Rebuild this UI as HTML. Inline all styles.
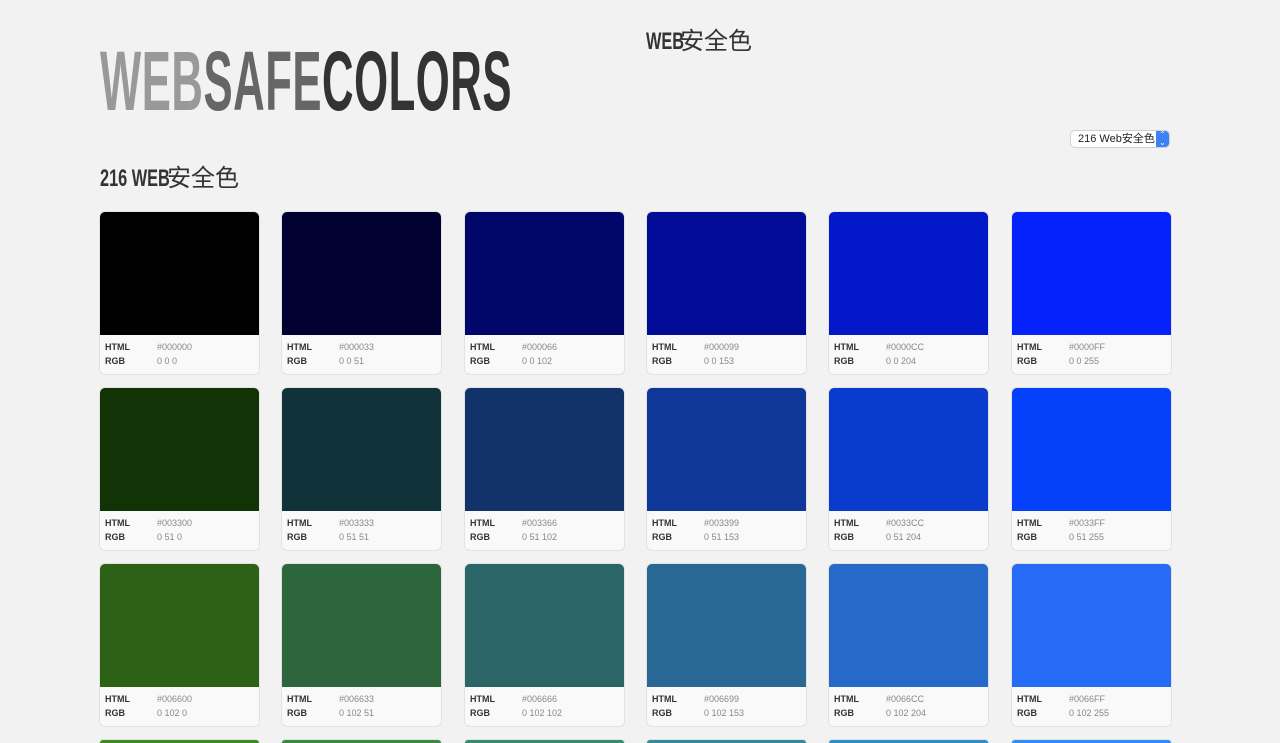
<!DOCTYPE html>
<html><head><meta charset="utf-8"><style>
html,body{margin:0;padding:0;background:#f2f2f2;width:1280px;height:743px;overflow:hidden;font-family:"Liberation Sans","Noto Sans CJK SC",sans-serif}
#wrap{position:relative;width:1280px;height:743px;overflow:hidden}
.logo{position:absolute;left:100px;top:36px;font-weight:bold;font-size:84px;line-height:90px;transform:scaleX(0.52);transform-origin:left top;white-space:nowrap;letter-spacing:1px}
.sub{position:absolute;left:646px;top:27px;font-size:24px;line-height:30px;color:#333;white-space:nowrap}
.h2{position:absolute;left:100px;top:164px;font-size:24px;line-height:30px;color:#333;white-space:nowrap}
.lat{display:inline-block;overflow:visible;vertical-align:top}
.lat b{display:inline-block;transform:scaleX(.68);transform-origin:left}
.sel{position:absolute;left:1071px;top:131px;width:98px;height:16px;background:#fff;border-radius:4px;box-shadow:0 0 0 1px #d0d0d0;font-size:11px;line-height:16px;color:#222}
.sel span{margin-left:7px}
.sel i{position:absolute;right:0;top:0;width:13px;height:16px;background:#3b82f6;border-radius:0 4px 4px 0;color:#fff;font-style:normal;font-size:8px;text-align:center;line-height:8px}
.card{position:absolute;width:159px;height:162px;border-radius:5px;overflow:hidden;background:#f9f9f9;box-shadow:0 0 0 1px #e2e2e2}
.card .c{height:123px}
.card .t{font-size:9px;color:#333;padding:5px 0 0 5px;line-height:14px}
.card .t b{display:inline-block;width:52px}
.card .t span{color:#888}
</style></head><body><div id="wrap">
<div class="logo"><span style="color:#999">WEB</span><span style="color:#666">SAFE</span><span style="color:#333">COLORS</span></div>
<div class="sub"><span class="lat" style="width:34px"><b>WEB</b></span>安全色</div>
<div class="sel"><span>216 Web安全色</span><i>⌃<br>⌄</i></div>
<div class="h2"><span class="lat" style="width:67px"><b>216 WEB</b></span>安全色</div>
<div id="g"></div>
</div>
<script>
var xs=[100,282,465,647,829,1012],ys=[212,388,564,740];
var rows=[
[["#000000","000000","0 0 0"],["#000131","000033","0 0 51"],["#01066a","000066","0 0 102"],["#020c96","000099","0 0 153"],["#0318c8","0000CC","0 0 204"],["#0522fb","0000FF","0 0 255"]],
[["#123305","003300","0 51 0"],["#10333a","003333","0 51 51"],["#11336a","003366","0 51 102"],["#0f3799","003399","0 51 153"],["#0a3bcf","0033CC","0 51 204"],["#0540fb","0033FF","0 51 255"]],
[["#2d6216","006600","0 102 0"],["#2d653c","006633","0 102 51"],["#2a6568","006666","0 102 102"],["#296795","006699","0 102 153"],["#2769c8","0066CC","0 102 204"],["#266bf5","0066FF","0 102 255"]],
[["#3b8a22","009900","0 153 0"],["#3a8a45","009933","0 153 51"],["#378a70","009966","0 153 102"],["#348b98","009999","0 153 153"],["#318dc8","0099CC","0 153 204"],["#2e8ef6","0099FF","0 153 255"]]];
var h="";
rows.forEach(function(r,i){r.forEach(function(c,j){
if(i==3){h+='<div class="card" style="left:'+xs[j]+'px;top:740px;height:3px;border-radius:5px 5px 0 0;background:'+c[0]+'"></div>';return;}
h+='<div class="card" style="left:'+xs[j]+'px;top:'+ys[i]+'px"><div class="c" style="background:'+c[0]+'"></div><div class="t"><b>HTML</b><span>#'+c[1]+'</span><br><b>RGB</b><span>'+c[2]+'</span></div></div>';});});
document.getElementById("g").innerHTML=h;
</script>
</body></html>
